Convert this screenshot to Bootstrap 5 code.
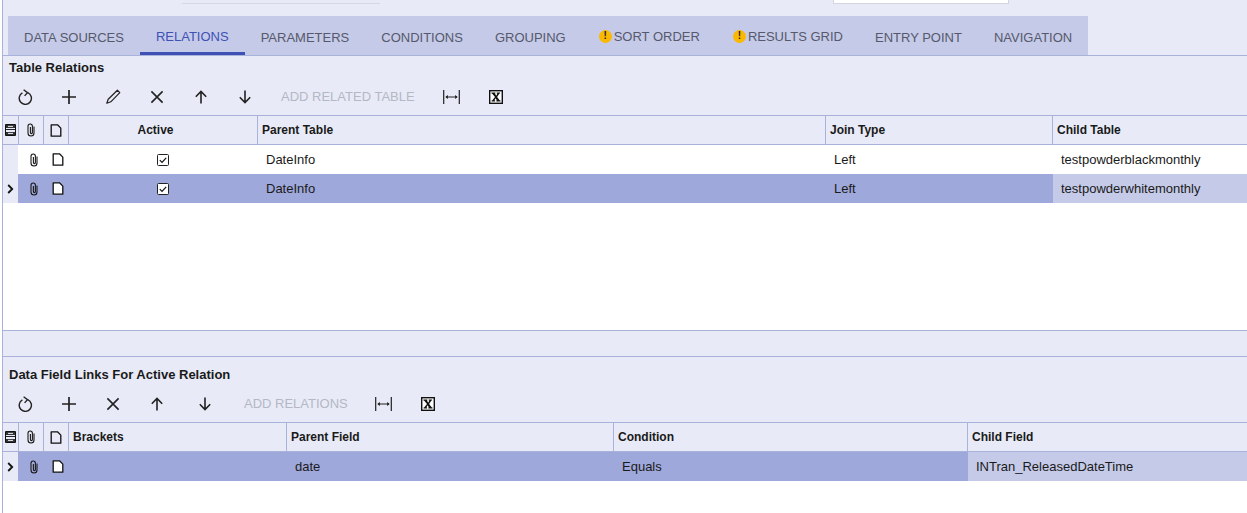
<!DOCTYPE html>
<html lang="en"><head><meta charset="utf-8"><title>Relations</title>
<link rel="stylesheet" href="https://cdn.jsdelivr.net/npm/bootstrap@5.3.0/dist/css/bootstrap.min.css">
<style>
html,body{height:513px;overflow:hidden}
body{background:#fff;font-family:"Liberation Sans",Arial,sans-serif;font-size:13px;color:#1a1a1a;width:1247px}
.shell{border-left:1px solid #a9b3d9;margin-left:2px;height:513px;display:flex;flex-direction:column;width:1245px}
.topband{height:55px;background:#e8ebf7;border-bottom:1px solid #a9b3d9;box-sizing:content-box;position:relative;display:flex;align-items:flex-end;padding-left:5px}
.fieldline{position:absolute;top:3px;left:179px;width:198px;height:1px;background:#d5d8e4}
.fieldbox{position:absolute;top:0;left:830px;width:176px;height:4px;background:#fff;border:1px solid #d3d5dc;border-top:0}
.tabstrip{background:#c5cae8;height:39px;display:flex}
.tabitem{color:#56596b;font-size:13px;padding:3px 16px 0;height:39px;white-space:nowrap;display:flex;align-items:center;line-height:1}
.tabitem.on{color:#3f51b5;border-bottom:3px solid #3f51b5;padding:5px 16px 0}
.tabitem.warn{padding:1px 16px 0}
.warnmark{width:13px;height:13px;border-radius:50%;background:#fbb800;color:#222;font-size:10px;font-weight:700;display:inline-flex;align-items:center;justify-content:center;margin:0 2px 0 1px}
.panel{background:#e8ebf7}
.paneltitle{font-weight:700;font-size:13px;color:#1a1a1a;padding-left:6px;height:23px;line-height:23px}
.paneltitle.lower{margin-top:4px;height:28px;line-height:28px}
.tools{display:flex;align-items:center;height:36px;color:#222}
.tools.lower{height:30px;margin-bottom:3px}
.toolbtn{width:44px;display:flex;justify-content:center;align-items:center;flex:none}
.toolbtn.wide{width:48px;padding-left:4px}
.toolbtn svg{display:block}
.tooltext{font-size:13px;color:#b4b7c4;white-space:nowrap;padding:0 15px 0 14px}
.tools.lower .tooltext{padding:0 14px 0 17px}
.gridrow{display:grid;height:29px;align-items:stretch}
.rel{grid-template-columns:16px 25px 25px 189px 568px 227px 1fr}
.lnk{grid-template-columns:16px 25px 25px 218px 327px 354px 1fr}
.gridrow>div{display:flex;align-items:center;min-width:0;white-space:nowrap}
.headrow{background:#e8ebf7;border-top:1px solid #a9b3d9;border-bottom:1px solid #a9b3d9;height:30px;font-weight:700;font-size:12px}
.headrow>div{padding-left:4px;border-right:1px solid #a9b3d9}
.headrow>div:last-child{border-right:0}
.headrow>.ctr{justify-content:center;padding-left:0}
.headrow>.shifted{padding-right:15px}
.bodyrow{background:#fff;font-size:13px}
.bodyrow>div{padding-left:8px}
.bodyrow>.ctr{justify-content:center;padding-left:0}
.bodyrow>.nudge{padding-left:4px}
.bodyrow>.nudgedoc{padding-left:2px}
.bodyrow>.boxcell{padding-right:2px}
.bodyrow>.sel{background:#e8ebf7;padding-left:0;justify-content:center;margin-right:1px}
.bodyrow.cur{background:#9fa8da}
.bodyrow.cur>.last{background:#c5cae8}
.docwhite{--docfill:#fff}
.splitband{height:27px;background:#e8ebf7;border-top:1px solid #a9b3d9;border-bottom:1px solid #a9b3d9}
.freespace{height:127px;background:#fff}
</style></head><body>
<svg width="0" height="0" class="d-none" aria-hidden="true"><defs>
<symbol id="clip" viewBox="0 0 10 14"><path d="M8 3.6v6.4a3 3 0 0 1-6 0V3.2a2.2 2.2 0 0 1 4.4 0v6.4a1 1 0 0 1-2 0V4" fill="none" stroke="currentColor" stroke-width="1.1"/></symbol>
<symbol id="doc" viewBox="0 0 12 13"><path d="M1.2.8h6.3l3.3 3.3v8.1H1.2z" fill="var(--docfill,none)" stroke="#111" stroke-width="1.3" stroke-linejoin="round"/></symbol>
<symbol id="cols" viewBox="0 0 11 12"><path d="M.5.5h10v11H.5z" fill="#e8ebf7" stroke="#111"/><path d="M1 1h9v3H1zM1 8h9v3H1z" fill="#333"/><path d="M1 5.5h9" stroke="#222"/><path d="M3 2.4h5M3 9.4h5" stroke="#e8ebf7"/></symbol>
<symbol id="chk" viewBox="0 0 12 12"><rect x=".5" y=".5" width="11" height="11" rx="1" fill="var(--chkfill,#fff)" stroke="#222"/><path d="M2.8 6.2l2.2 2.2 4.2-4.6" fill="none" stroke="#111" stroke-width="1.2"/></symbol>
<symbol id="sel" viewBox="0 0 7 10"><path d="M1.2 1l4 4-4 4" fill="none" stroke="#111" stroke-width="1.8"/></symbol>
<symbol id="refresh" viewBox="0 0 16 16"><path d="M5.4 3.9A6.1 6.1 0 1 0 10.6 3.6" fill="none" stroke="#222" stroke-width="1.4"/><path d="M6.6.8l3.9 2.8-2.9 3.3" fill="none" stroke="#222" stroke-width="1.4"/></symbol>
<symbol id="plus" viewBox="0 0 16 16"><path d="M8 1v14M1 8h14" stroke="#222" stroke-width="1.7"/></symbol>
<symbol id="pen" viewBox="0 0 16 16"><path d="M12.4 1.2l2.4 2.4-9 9.2-4 1.4 1.4-4z" fill="none" stroke="#222" stroke-width="1.2" stroke-linejoin="round"/></symbol>
<symbol id="cross" viewBox="0 0 14 14"><path d="M1.4 1.4l11.2 11.2M12.6 1.4L1.4 12.6" stroke="#222" stroke-width="1.6"/></symbol>
<symbol id="up" viewBox="0 0 14 14"><path d="M7 13.5V1.5M1.8 6.7L7 1.5l5.2 5.2" fill="none" stroke="#222" stroke-width="1.6"/></symbol>
<symbol id="down" viewBox="0 0 14 14"><path d="M7 .5v12M1.8 7.3L7 12.5l5.2-5.2" fill="none" stroke="#222" stroke-width="1.6"/></symbol>
<symbol id="fit" viewBox="0 0 17 14"><path d="M.7 0v14M16.3 0v14" stroke="#222" stroke-width="1.2"/><path d="M3 7h11" stroke="#222"/><path d="M2.3 7l2.6-2v4zM14.7 7l-2.6-2v4z" fill="#222"/></symbol>
<symbol id="xl" viewBox="0 0 14 14"><rect x=".7" y=".7" width="12.6" height="12.6" fill="#fff" stroke="#111" stroke-width="1.4"/><path d="M2.4 2.6h4v.8l-.5.2L7.2 5.8l1.2-2.2-.7-.2v-.8h3.4v.8l-.7.2L8.1 7l2.5 3.3.9.3v.8H7.3v-.8l.6-.3L6.6 8.3 5.4 10.3l.7.3v.8H2.6v-.8l.8-.3L6 7 3.3 3.7l-.9-.3z" fill="#111"/></symbol>
</defs></svg>
<div class="shell">
 <div class="topband"><span class="fieldline"></span><span class="fieldbox"></span>
  <nav class="tabstrip">
   <div class="tabitem">DATA SOURCES</div><div class="tabitem on">RELATIONS</div><div class="tabitem">PARAMETERS</div><div class="tabitem">CONDITIONS</div><div class="tabitem">GROUPING</div>
   <div class="tabitem warn"><span class="warnmark">!</span>SORT ORDER</div><div class="tabitem warn"><span class="warnmark">!</span>RESULTS GRID</div>
   <div class="tabitem">ENTRY POINT</div><div class="tabitem">NAVIGATION</div>
  </nav>
 </div>
 <section class="panel">
  <div class="paneltitle">Table Relations</div>
  <div class="tools">
   <span class="toolbtn"><svg width="16" height="16"><use href="#refresh"/></svg></span>
   <span class="toolbtn"><svg width="16" height="16"><use href="#plus"/></svg></span>
   <span class="toolbtn"><svg width="16" height="16"><use href="#pen"/></svg></span>
   <span class="toolbtn"><svg width="14" height="14"><use href="#cross"/></svg></span>
   <span class="toolbtn"><svg width="14" height="14"><use href="#up"/></svg></span>
   <span class="toolbtn"><svg width="14" height="14"><use href="#down"/></svg></span>
   <span class="tooltext">ADD RELATED TABLE</span>
   <span class="toolbtn"><svg width="17" height="14"><use href="#fit"/></svg></span>
   <span class="toolbtn"><svg width="14" height="14"><use href="#xl"/></svg></span>
  </div>
 </section>
 <div class="gridrow rel headrow">
  <div class="ctr"><svg width="11" height="12"><use href="#cols"/></svg></div><div class="ctr"><svg width="10" height="14"><use href="#clip"/></svg></div><div class="ctr"><svg width="12" height="13"><use href="#doc"/></svg></div>
  <div class="ctr shifted">Active</div><div>Parent Table</div><div>Join Type</div><div>Child Table</div>
 </div>
 <div class="gridrow rel bodyrow">
  <div class="sel"></div><div class="ctr nudge"><svg width="10" height="14"><use href="#clip"/></svg></div><div class="ctr nudgedoc"><svg width="12" height="13"><use href="#doc"/></svg></div>
  <div class="ctr boxcell"><svg width="12" height="12"><use href="#chk"/></svg></div><div>DateInfo</div><div>Left</div><div class="last">testpowderblackmonthly</div>
 </div>
 <div class="gridrow rel bodyrow cur">
  <div class="sel"><svg width="7" height="10"><use href="#sel"/></svg></div><div class="ctr nudge"><svg width="10" height="14"><use href="#clip"/></svg></div><div class="ctr nudgedoc docwhite"><svg width="12" height="13"><use href="#doc"/></svg></div>
  <div class="ctr boxcell"><svg width="12" height="12"><use href="#chk"/></svg></div><div>DateInfo</div><div>Left</div><div class="last">testpowderwhitemonthly</div>
 </div>
 <div class="freespace"></div>
 <div class="splitband"></div>
 <section class="panel">
  <div class="paneltitle lower">Data Field Links For Active Relation</div>
  <div class="tools lower">
   <span class="toolbtn"><svg width="16" height="16"><use href="#refresh"/></svg></span>
   <span class="toolbtn"><svg width="16" height="16"><use href="#plus"/></svg></span>
   <span class="toolbtn"><svg width="14" height="14"><use href="#cross"/></svg></span>
   <span class="toolbtn"><svg width="14" height="14"><use href="#up"/></svg></span>
   <span class="toolbtn wide"><svg width="14" height="14"><use href="#down"/></svg></span>
   <span class="tooltext">ADD RELATIONS</span>
   <span class="toolbtn"><svg width="17" height="14"><use href="#fit"/></svg></span>
   <span class="toolbtn"><svg width="14" height="14"><use href="#xl"/></svg></span>
  </div>
 </section>
 <div class="gridrow lnk headrow">
  <div class="ctr"><svg width="11" height="12"><use href="#cols"/></svg></div><div class="ctr"><svg width="10" height="14"><use href="#clip"/></svg></div><div class="ctr"><svg width="12" height="13"><use href="#doc"/></svg></div>
  <div>Brackets</div><div>Parent Field</div><div>Condition</div><div>Child Field</div>
 </div>
 <div class="gridrow lnk bodyrow cur">
  <div class="sel"><svg width="7" height="10"><use href="#sel"/></svg></div><div class="ctr nudge"><svg width="10" height="14"><use href="#clip"/></svg></div><div class="ctr nudgedoc docwhite"><svg width="12" height="13"><use href="#doc"/></svg></div>
  <div></div><div>date</div><div>Equals</div><div class="last">INTran_ReleasedDateTime</div>
 </div>
</div>
<script src="https://cdn.jsdelivr.net/npm/bootstrap@5.3.0/dist/js/bootstrap.bundle.min.js"></script>
</body></html>
